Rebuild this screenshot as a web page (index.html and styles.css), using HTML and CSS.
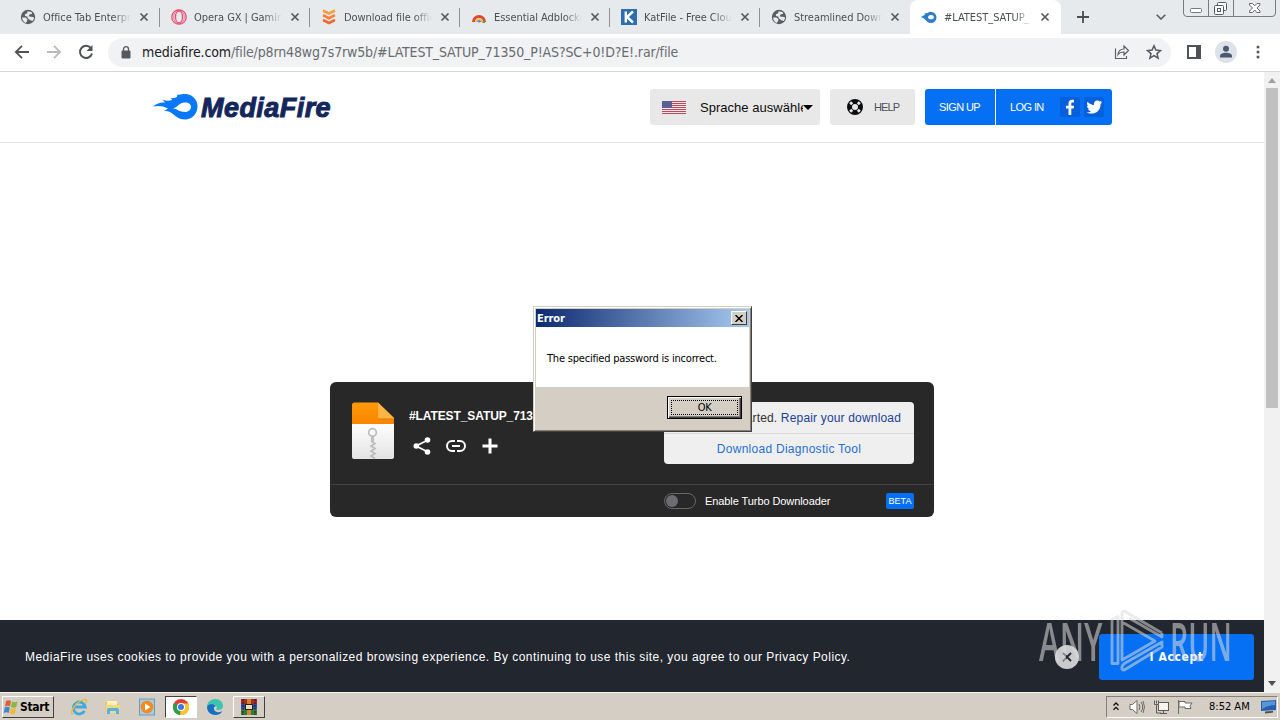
FILE: index.html
```html
<!DOCTYPE html>
<html lang="en">
<head>
    <meta charset="UTF-8">
    <meta name="viewport" content="width=device-width, initial-scale=1.0">
    <title>MediaFire</title>
    <link rel="stylesheet" href="styles.css">
</head>
<body>
    <svg class="defs" width="0" height="0">
        <symbol id="globe" viewBox="0 0 16 16">
            <circle cx="8" cy="8" r="7.2" fill="#5a5e63"/>
            <path d="M2 8.500h3.500l2 1.800-.6 2.200-1.500 1.500C3.600 13 2.200 11 2 8.500zM7.500 2.200l4 .8.800 1.800-2.800.8-.8 1.600 2 .6 2.800.2.6 1.500-1.500 2.500-2.300-.8-2.600-2-.4-1.800-2.500-.4.400-2 2-.8z" fill="#e7eaed"/>
        </symbol>
        <symbol id="close" viewBox="0 0 10 10">
            <path d="M1.500 1.500l7 7M8.500 1.500l-7 7" stroke="#55595e" stroke-width="1.700"/>
        </symbol>
        <symbol id="flame" viewBox="0 0 45 26">
            <path d="M0 12.500C4 9 8 8 12 8.500L9.500 5.500C13 7 16 7 19 6L18 3.800C20 4.500 22 4 24 3L24.500 .5C27 1 29 0 32 0c7 0 12.500 5.500 12.500 12.500S39 25.500 32 25.500c-6 0-9-3-12-5.500-3-2.500-5.500-3.500-9-3l4-2.500C10 11.500 4 11.500 0 12.500z" fill="#0a78fb"/>
            <path d="M20 14.500c4-.5 6-6 12-6 4 0 6 2 6 4.500S35.500 18 32 18c-6 0-7-3-12-3.500z" fill="#fff"/>
        </symbol>
    </svg>

    <div class="tabstrip">
        <div class="tab">
            <svg class="favicon"><use href="#globe"/></svg>
            <span class="tab-title">Office Tab Enterprise</span>
            <svg class="tab-close"><use href="#close"/></svg>
        </div>
        <div class="tab">
            <svg class="favicon" viewBox="0 0 16 16" fill="none" stroke="#ea4f78">
                <circle cx="8" cy="8" r="7.2" stroke-width="1.3"/>
                <ellipse cx="8" cy="8" rx="3.500" ry="6" stroke-width="1.3"/>
                <ellipse cx="8" cy="8" rx="5.300" ry="6.800" stroke-width=".7"/>
            </svg>
            <span class="tab-title">Opera GX | Gaming Browser</span>
            <svg class="tab-close"><use href="#close"/></svg>
        </div>
        <div class="tab">
            <svg class="favicon" viewBox="0 0 16 16" fill="none" stroke-width="2.6">
                <path d="M2 1.500l6 3 6-3" stroke="#f9a03c"/>
                <path d="M2 6.200l6 3 6-3" stroke="#f57f3b"/>
                <path d="M2 11l6 3 6-3" stroke="#ee6a35"/>
            </svg>
            <span class="tab-title">Download file office</span>
            <svg class="tab-close"><use href="#close"/></svg>
        </div>
        <div class="tab">
            <svg class="favicon" viewBox="0 0 16 16" fill="none">
                <path d="M2.500 13a5.500 5.500 0 0 1 11 0" stroke="#df4634" stroke-width="3"/>
                <path d="M5 13a3.200 3.200 0 0 1 6.200 0" stroke="#f6c431" stroke-width="2"/>
                <path d="M6.800 13a1.500 1.500 0 0 1 2.600 0" stroke="#4285f4" stroke-width="1.800"/>
                <path d="M11.500 13h2.500" stroke="#51a65b" stroke-width="2"/>
            </svg>
            <span class="tab-title">Essential Adblocker</span>
            <svg class="tab-close"><use href="#close"/></svg>
        </div>
        <div class="tab">
            <svg class="favicon" viewBox="0 0 16 16">
                <rect width="16" height="16" fill="#2d6db0"/>
                <path d="M4.800 2.500v11M12 2.500L6 8l6 5.500" stroke="#fff" stroke-width="2.400" fill="none"/>
            </svg>
            <span class="tab-title">KatFile - Free Cloud</span>
            <svg class="tab-close"><use href="#close"/></svg>
        </div>
        <div class="tab">
            <svg class="favicon"><use href="#globe"/></svg>
            <span class="tab-title">Streamlined Download</span>
            <svg class="tab-close"><use href="#close"/></svg>
        </div>
        <div class="tab active">
            <svg class="favicon" viewBox="0 0 16 16">
                <path d="M0 8l4-2.200L3.300 4.500 6.500 4A5.600 5.600 0 1 1 6 12.500L3 9.500z" fill="#2f7ccb"/>
                <ellipse cx="10" cy="8.200" rx="2.800" ry="2.100" fill="#fff"/>
            </svg>
            <span class="tab-title">#LATEST_SATUP_71350</span>
            <svg class="tab-close"><use href="#close"/></svg>
        </div>
        <svg class="new-tab" viewBox="0 0 12 12"><path d="M6 0v12M0 6h12" stroke="#4a4e52" stroke-width="1.800"/></svg>
        <svg class="tab-search" viewBox="0 0 10 6"><path d="M.7.7L5 5 9.300.7" fill="none" stroke="#5a5e63" stroke-width="1.600"/></svg>
        <svg class="window-buttons" viewBox="0 0 94 17" fill="none" stroke="#777b80">
            <path d="M.5 0v13q0 3.500 3.500 3.500h85q3.500 0 3.500-3.500V0M25.500 0v16M50.500 0v16"/>
            <rect x="7.500" y="8.500" width="11" height="4" rx="1" fill="#fff"/>
            <g stroke="#55585c"><rect x="34.500" y="2.500" width="9" height="8" rx="1" fill="#fff"/><rect x="31.500" y="5.500" width="9" height="9" rx="1" fill="#fff"/><rect x="34.500" y="8.500" width="3" height="3"/></g>
            <path d="M66.500 3.500h3l2.200 2.300 2.200-2.300h3v1.500L74 8l3 3v1.500h-3.300L71.700 10l-2.200 2.500h-3V11l3-3-3-3z" fill="#fff" stroke="#66696d"/>
        </svg>
    </div>

    <div class="toolbar">
        <svg class="nav-icon" viewBox="0 0 16 16" fill="none" stroke="#4f5357" stroke-width="1.800"><path d="M15 8H2M8 1.800L1.800 8 8 14.200"/></svg>
        <svg class="nav-icon" viewBox="0 0 16 16" fill="none" stroke="#b9bcbf" stroke-width="1.800"><path d="M1 8h13M8 1.800L14.200 8 8 14.200"/></svg>
        <svg class="nav-icon" viewBox="0 0 16 16" fill="none" stroke="#4f5357" stroke-width="2"><path d="M13.200 4.500A6.100 6.100 0 1 0 14 9.500"/><path d="M14.500 1v6h-6z" fill="#4f5357" stroke="none"/></svg>
        <div class="omnibox">
            <svg class="lock" viewBox="0 0 10 13"><rect x=".5" y="4.500" width="9" height="8" rx="1" fill="#55595e"/><path d="M2.500 5V3.200a2.500 2.500 0 0 1 5 0V5" fill="none" stroke="#55595e" stroke-width="1.300"/></svg>
            <span class="url"><b>mediafire.com</b>/file/p8rn48wg7s7rw5b/#LATEST_SATUP_71350_P!AS?SC+0!D?E!.rar/file</span>
            <svg class="share" viewBox="0 0 16 16" fill="none" stroke="#5c6065" stroke-width="1.200"><path d="M1.500 4.500v10h11V12M4 10.500c.5-4 2.500-5.500 6-5.500V2l4.500 4.500L10 11V8c-3 0-4.500.5-6 2.500z"/></svg>
            <svg class="star" viewBox="0 0 16 16" fill="none" stroke="#55595e" stroke-width="1.500"><path d="M8 1.800l1.900 4.300 4.600.4-3.500 3.100 1.100 4.600L8 11.700l-4.100 2.500L5 9.600 1.500 6.500l4.600-.4z"/></svg>
        </div>
        <svg class="side-panel" viewBox="0 0 14 14"><path d="M1 1h12v12H1z" fill="none" stroke="#4f5357" stroke-width="2"/><path d="M9 1h4v12H9z" fill="#4f5357"/></svg>
        <svg class="avatar" viewBox="0 0 22 22"><circle cx="11" cy="11" r="11" fill="#dde1e8"/><circle cx="11" cy="7.800" r="3" fill="#4b5873"/><path d="M5 16.500v-1.500c0-2 3-3.200 6-3.200s6 1.200 6 3.200v1.500z" fill="#4b5873"/></svg>
        <svg class="kebab" viewBox="0 0 4 14" fill="#55595e"><circle cx="2" cy="2" r="1.500"/><circle cx="2" cy="7" r="1.500"/><circle cx="2" cy="12" r="1.500"/></svg>
    </div>

    <div class="viewport">
        <div class="page">
            <header>
                <div class="logo">
                    <svg><use href="#flame"/></svg>
                    <span>MediaFire</span>
                </div>
                <div class="language">
                    <svg class="flag" viewBox="0 0 24 13">
                        <rect width="24" height="13" fill="#f4e9ea"/>
                        <path d="M0 .5h24M0 2.500h24M0 4.500h24M0 6.500h24M0 8.500h24M0 10.500h24M0 12.500h24" stroke="#b9485a"/>
                        <rect width="10" height="7" fill="#5a5f94"/>
                    </svg>
                    <span>Sprache auswählen</span>
                    <i class="caret"></i>
                </div>
                <div class="help">
                    <svg viewBox="0 0 16 16"><circle cx="8" cy="8" r="5.500" fill="none" stroke="#0b0c0e" stroke-width="5"/><path d="M3.200 3.200l2 2M12.800 3.200l-2 2M3.200 12.800l2-2M12.800 12.800l-2-2" stroke="#e8e8e8" stroke-width="2.800"/></svg>
                    HELP
                </div>
                <div class="account">
                    <span class="sign-up">SIGN UP</span>
                    <span class="log-in">LOG IN</span>
                    <svg class="social" viewBox="0 0 20 20"><rect width="20" height="20" rx="2" fill="#0660db"/><path d="M8.500 18v-6.500H6V8.700h2.500V6.500C8.500 4 10 2.800 12 2.800h2v2.700h-1.500c-1 0-1.200.5-1.200 1.400v1.800h2.800l-.4 2.800h-2.400V18z" fill="#fff"/></svg>
                    <svg class="social" viewBox="0 0 20 20"><rect width="20" height="20" rx="2" fill="#0660db"/><path d="M2.500 15.500c2 0 3.500-.5 4.500-1.300-1.500 0-2.600-1-3-2.200h1.300C3.700 11.500 3 10.200 3 8.700l1.300.4C3 8 2.700 6.200 3.500 4.700 5.200 6.700 7.400 7.900 10 8c-.5-2.500 1-4.500 3.300-4.500 1 0 1.800.4 2.400 1l2-.8-1.200 1.900 1.800-.5-1.700 1.800c.2 5-3.500 9.600-8.900 9.600-2 0-3.800-.4-5.200-1z" fill="#fff"/></svg>
                </div>
            </header>

            <div class="download-card">
                <div class="file-row">
                    <svg class="zip" viewBox="0 0 42 58">
                        <defs>
                            <linearGradient id="orange" x2="0" y2="1"><stop stop-color="#ff9a08"/><stop offset="1" stop-color="#fa8500"/></linearGradient>
                            <linearGradient id="paper" x2="0" y2="1"><stop stop-color="#fff"/><stop offset="1" stop-color="#e3e3e3"/></linearGradient>
                        </defs>
                        <path d="M0 21h42v34q0 2-2 2H2q-2 0-2-2z" fill="url(#paper)"/>
                        <path d="M0 22V3q0-2.500 2.500-2.500H26L42 16v6z" fill="url(#orange)"/>
                        <path d="M26 .5L42 16v1H26z" fill="#ffb443"/><path d="M26 17h16" stroke="#d97a0a"/>
                        <circle cx="20.500" cy="30.500" r="3.800" fill="none" stroke="#bcbcbc" stroke-width="1.800"/>
                        <path d="M20.500 34v5" stroke="#bcbcbc" stroke-width="3"/>
                        <path d="M19 39l4 2.500-4 2.500 4 2.500-4 2.500 4 2.500-4 2.500 4 2.500" fill="none" stroke="#bcbcbc" stroke-width="1.700"/>
                    </svg>
                    <div class="file-info">
                        <div class="file-name">#LATEST_SATUP_713</div>
                        <div class="file-actions">
                            <svg viewBox="0 0 20 20"><path d="M16 4L4 10l12 6" fill="none" stroke="#fff" stroke-width="1.800"/><g fill="#fff"><circle cx="15.500" cy="4" r="2.800"/><circle cx="4.300" cy="10" r="2.800"/><circle cx="15.500" cy="16" r="2.800"/></g></svg>
                            <svg viewBox="0 0 20 20" fill="none" stroke="#fff" stroke-width="2"><path d="M9 5H6a5 5 0 0 0 0 10h3M11 5h3a5 5 0 0 1 0 10h-3M6 10h8"/></svg>
                            <svg viewBox="0 0 20 20"><path d="M10 2.500v15M2.500 10h15" stroke="#fff" stroke-width="3"/></svg>
                        </div>
                    </div>
                    <div class="download-box">
                        <div class="started">Download started. <a>Repair your download</a></div>
                        <div class="diagnostic"><a>Download Diagnostic Tool</a></div>
                    </div>
                </div>
                <div class="turbo-row">
                    <span class="toggle"></span>
                    <span class="turbo-label">Enable Turbo Downloader</span>
                    <span class="beta">BETA</span>
                </div>
            </div>

            <div class="cookie-bar">
                <p>MediaFire uses cookies to provide you with a personalized browsing experience. By continuing to use this site, you agree to our Privacy Policy.</p>
                <svg class="dismiss" viewBox="0 0 24 24"><circle cx="12" cy="12" r="12" fill="#c9cacc"/><path d="M8 8l8 8M16 8l-8 8" stroke="#22262f" stroke-width="1.800"/></svg>
                <button class="accept">I Accept</button>
            </div>
        </div>
        <div class="scrollbar">
            <i class="arrow up"></i>
            <div class="thumb"></div>
            <i class="arrow down"></i>
        </div>
    </div>

    <div class="taskbar">
        <div class="start">
            <svg viewBox="0 0 16 16"><path d="M3 2c2-1 3.500-1 5 0L7 7.500c-1.500-1-3-1-5 0z" fill="#e0603a"/><path d="M9 2.500c2 1 3.500 1 5.500 0l-1.200 5.500c-2 1-3.500 1-5.300 0z" fill="#86b93c"/><path d="M1.800 8.500c2-1 3.500-1 5 0L5.700 14c-1.500-1-3-1-5 0z" fill="#3f86cf"/><path d="M7.800 9c2 1 3.500 1 5.300 0L12 14.500c-2 1-3.500 1-5.300 0z" fill="#f2b938"/></svg>
            Start
        </div>
        <svg class="task-icon" viewBox="0 0 18 18" fill="none"><path d="M14.500 13a6 6 0 1 1 .7-4H5" stroke="#43a8e0" stroke-width="2.800"/><path d="M3 16C0 16 2 10 7 5.500S16 .5 16.500 2.500c.2 1-.3 2-.8 3" stroke="#e9b93c" stroke-width="1.400"/></svg>
        <svg class="task-icon" viewBox="0 0 18 18"><path d="M1 4h5l1.500 2H15v9H2z" fill="#e9c660"/><path d="M3 3h10v5H3z" fill="#fff2b5"/><path d="M2 7h14v8H2z" fill="#f1d885"/><path d="M3 16v-4q0-2 2-2h8q2 0 2 2v4h-3v-3H6v3z" fill="#58b1df"/></svg>
        <svg class="task-icon" viewBox="0 0 18 18"><rect x="1.500" y="1" width="15" height="16" fill="#a9cbe2" stroke="#6b9cc0"/><circle cx="9" cy="9" r="6.300" fill="#f28a1d"/><path d="M7 5.500l5.500 3.500L7 12.500z" fill="#fff"/></svg>
        <div class="task-button pressed">
            <svg viewBox="0 0 18 18"><circle cx="9" cy="9" r="8" fill="#e4402f"/><path d="M9 9L2 5a8 8 0 0 0 6 12z" fill="#2ca14c"/><path d="M9 9l-1 8a8 8 0 0 0 8.200-11.500H9z" fill="#fbc52d"/><circle cx="9" cy="9" r="4" fill="#fff"/><circle cx="9" cy="9" r="3" fill="#3b78e7"/></svg>
        </div>
        <svg class="task-icon edge" viewBox="0 0 18 18"><path d="M1 9C1 4 5 1 9.500 1S17 4.500 17 8c0 2.500-2 4-5 4-1.500 0-2-.5-1.500-1.500C11.500 8 9 6 6 6 3.500 6 1.500 7.500 1 9z" fill="#3cc4b0"/><path d="M1 9c.5-2 2.500-3 5-3 2 0 3.500 1 4 2.300C7 8 7 13 11 14c2 .5 4 0 5.500-1-1.500 2.600-4 4-7 4C5 17 1 14 1 9z" fill="#1570bf"/></svg>
        <div class="task-button">
            <svg viewBox="0 0 18 18"><path d="M1 1h16v5H1z" fill="#a82a2c"/><path d="M1 6h16v5.500H1z" fill="#2e4fa3"/><path d="M1 11.500h16V17H1z" fill="#347a38"/><path d="M7 1h4v16H7z" fill="#c88b27"/><path d="M3 1v16M15 1v16" stroke="#1e1b25" stroke-dasharray="2 1"/><rect x="5.500" y="6.500" width="7" height="5" fill="#eee0b5" stroke="#292014"/></svg>
        </div>
        <div class="tray">
            <svg class="chevrons" viewBox="0 0 6 9" fill="none" stroke="#111" stroke-width="1.300"><path d="M.5 3.500L3 1l2.500 2.500M.5 7.800L3 5.300l2.500 2.500"/></svg>
            <svg class="tray-icon" viewBox="0 0 16 16" fill="#fff" stroke="#6b6b68"><path d="M1 5.500h2.500L8 1.500v13l-4.500-4H1z"/><path d="M10 5q2 3 0 6M12 3q3.500 5 0 10M14 2q3 6 0 12" fill="none"/></svg>
            <svg class="tray-icon" viewBox="0 0 16 16" fill="#f6f4ef" stroke="#5c5b58"><rect x="5.500" y="3.500" width="10" height="8"/><path d="M7 14.500h7M10.500 12v2"/><path d="M1.500 1.500v4h2V14H8M3.500 1.500v3M5.500 1.500v4h-2" fill="none"/></svg>
            <svg class="tray-icon" viewBox="0 0 16 16" fill="#fff" stroke="#6b6b68"><path d="M1.500 1v14M2 2.500h6v1.500h7l-2 3 1 2.500H8V8H2z"/></svg>
            <span class="clock">8:52 AM</span>
            <svg class="desktop-icon" viewBox="0 0 16 14"><path d="M0 1l15-1v10L0 11z" fill="#265fae"/><path d="M1 2l13-1v4Q7 5 1 9z" fill="#5994d6"/><path d="M4 13.500l8-1V11l-8 .5z" fill="#4a4d53"/></svg>
        </div>
    </div>

    <div class="dialog">
        <div class="dialog-title">
            Error
            <span class="dialog-close"><svg viewBox="0 0 8 7"><path d="M.5 0l7 7M7.500 0l-7 7" stroke="#000" stroke-width="1.400"/></svg></span>
        </div>
        <div class="dialog-message">The specified password is incorrect.</div>
        <div class="dialog-footer"><div class="ok"><span>OK</span></div></div>
    </div>

    <div class="watermark">
        <span class="any">ANY</span>
        <svg viewBox="0 0 56 64" fill="none" stroke-linejoin="round">
            <path d="M3 10.500v44h6v-47zM13 48V4.500q0-3 3-2L53 24M13 13l33 19-33 19zM53 24v4L20 9M53 33L18 53q-6 3-5 7 1 2 4 0l36-22z"/>
        </svg>
        <span class="run">RUN</span>
    </div>
</body>
</html>
```
FILE: styles.css
```css
* {
    box-sizing: border-box;
}

body {
    margin: 0;
    width: 1280px;
    height: 720px;
    overflow: hidden;
    display: flex;
    flex-direction: column;
    position: relative;
    background-color: white;
    font-family: "Liberation Sans", Arial, sans-serif;
}

svg {
    display: block;
    flex: none;
}

.defs {
    position: absolute;
}

/* browser tabs */
.tabstrip {
    height: 34px;
    flex: none;
    display: flex;
    align-items: center;
    padding-left: 10px;
    background-color: #e7eaed;
    font-family: "DejaVu Sans Condensed", "DejaVu Sans", sans-serif;
    font-size: 11px;
    color: #4b4f54;
}

.tab {
    width: 150px;
    height: 34px;
    display: flex;
    align-items: center;
    padding: 0 10px 0 11px;
    background: linear-gradient(#8d9195, #8d9195) right 8px / 1px 19px no-repeat;
}

.tab:first-child {
    padding-left: 10px;
    padding-right: 11px;
}

.tab:nth-child(6) {
    background: none;
}

.tab.active {
    background: white;
    border-radius: 8px 8px 0 0;
    width: 151px;
    padding-right: 11px;
}

.favicon {
    width: 16px;
    height: 16px;
    margin-right: 7px;
}

.tab-title {
    width: 88px;
    overflow: hidden;
    white-space: nowrap;
    letter-spacing: -0.05px;
    -webkit-mask-image: linear-gradient(to right, black 80%, transparent);
    mask-image: linear-gradient(to right, black 80%, transparent);
}

.tab-close {
    width: 10px;
    height: 10px;
    margin-left: auto;
}

.new-tab {
    width: 12px;
    height: 12px;
    margin-left: 16px;
}

.tab-search {
    width: 10px;
    height: 6px;
    margin-left: 67px;
}

.window-buttons {
    width: 94px;
    height: 17px;
    margin-left: 17px;
    align-self: flex-start;
}

/* address bar */
.toolbar {
    height: 38px;
    flex: none;
    display: flex;
    align-items: center;
    padding: 0 20px 1px 14px;
    border-bottom: 1px solid #d4d6d8;
}

.nav-icon {
    width: 16px;
    height: 16px;
    margin-right: 16px;
}

.omnibox {
    width: 1063px;
    height: 29px;
    margin-left: -2px;
    border-radius: 15px;
    background-color: #f1f2f4;
    display: flex;
    align-items: center;
    padding: 0 9px 0 13px;
}

.lock {
    width: 10px;
    height: 13px;
    margin-right: 11px;
}

.url {
    font-family: "DejaVu Sans Condensed", "DejaVu Sans", sans-serif;
    font-size: 14px;
    letter-spacing: -0.14px;
    white-space: nowrap;
    color: #686c71;
}

.url b {
    font-weight: normal;
    color: #202124;
}

.share {
    width: 16px;
    height: 16px;
    margin-left: auto;
}

.star {
    width: 16px;
    height: 16px;
    margin-left: 16px;
}

.side-panel {
    width: 14px;
    height: 14px;
    margin-left: 16px;
}

.avatar {
    width: 22px;
    height: 22px;
    margin-left: 14px;
}

.kebab {
    width: 4px;
    height: 14px;
    margin-left: auto;
}

/* web page */
.viewport {
    height: 620px;
    flex: none;
    display: flex;
}

.page {
    width: 1264px;
    display: flex;
    flex-direction: column;
}

header {
    height: 71px;
    display: flex;
    align-items: center;
    padding: 0 152px 0 153px;
    border-bottom: 1px solid #e5e5e6;
}

.logo {
    display: flex;
    align-items: center;
    margin-right: auto;
    font-size: 27px;
    font-weight: bold;
    font-style: italic;
    letter-spacing: 0.45px;
    line-height: 26px;
    color: #13275d;
    -webkit-text-stroke: 1px #13275d;
}

.logo svg {
    width: 45px;
    height: 26px;
    margin-right: 3px;
}

.logo span {
    padding-top: 2px;
}

.language,
.help,
.account {
    height: 36px;
    display: flex;
    align-items: center;
    border-radius: 3px;
    background-color: #e8e8e8;
}

.language {
    width: 170px;
    padding: 0 7px 0 12px;
    font-size: 13px;
    color: #0d0d0d;
}

.language span {
    width: 103px;
    margin-left: 14px;
    overflow: hidden;
    white-space: nowrap;
    letter-spacing: 0.03px;
}

.flag {
    width: 24px;
    height: 13px;
}

.caret {
    border: 5px solid transparent;
    border-top-color: #000;
    border-bottom: 0;
}

.help {
    width: 85px;
    margin: 0 10px;
    padding-left: 17px;
    font-size: 11px;
    letter-spacing: -0.9px;
    color: #4a505a;
}

.help svg {
    width: 16px;
    height: 16px;
    margin-right: 11px;
}

.account {
    width: 187px;
    background-color: #0570f4;
    color: white;
    font-size: 11px;
    letter-spacing: -0.6px;
}

.sign-up {
    width: 71px;
    line-height: 36px;
    padding-left: 14px;
    border-right: 1px solid white;
}

.log-in {
    width: 64px;
    padding-left: 14px;
}

.social {
    width: 20px;
    height: 20px;
    margin-right: 4px;
}

.download-card {
    width: 604px;
    height: 135px;
    margin: 239px 0 0 330px;
    border-radius: 6px;
    background-color: #282828;
    color: white;
}

.file-row {
    height: 103px;
    display: flex;
    padding: 20px 20px 0 22px;
    border-bottom: 1px solid #444;
}

.zip {
    width: 42px;
    height: 58px;
}

.file-info {
    width: 255px;
    margin-left: 15px;
    flex: none;
}

.file-name {
    margin-top: 6px;
    font-size: 12px;
    font-weight: bold;
    line-height: 17px;
    letter-spacing: -0.1px;
}

.file-actions {
    display: flex;
    gap: 14px;
    margin: 11px 0 0 3px;
}

.file-actions svg {
    width: 20px;
    height: 20px;
}

.download-box {
    width: 250px;
    height: 62px;
    border-radius: 4px;
    background-color: #efefef;
    font-size: 12px;
    text-align: center;
    color: #333;
}

.started {
    height: 32px;
    line-height: 32px;
    border-bottom: 1px solid #d9dcde;
    letter-spacing: 0.17px;
    white-space: nowrap;
    text-align: right;
    padding-right: 13px;
}

.started a {
    color: #1b4197;
}

.diagnostic {
    line-height: 31px;
    letter-spacing: 0.27px;
}

.diagnostic a {
    color: #2770d2;
}

.turbo-row {
    height: 32px;
    display: flex;
    align-items: center;
    padding: 0 20px 0 334px;
    font-size: 11px;
}

.toggle {
    width: 32px;
    height: 16px;
    padding: 1px;
    border: 1px solid #66676b;
    border-radius: 8px;
}

.toggle::before {
    content: "";
    display: block;
    width: 12px;
    height: 12px;
    border-radius: 50%;
    background-color: #6c6d73;
}

.turbo-label {
    margin-left: 9px;
    letter-spacing: -0.08px;
}

.beta {
    width: 28px;
    margin-left: auto;
    border-radius: 2px;
    background-color: #0570f4;
    font-size: 9px;
    line-height: 16px;
    text-align: center;
}

.cookie-bar {
    height: 72px;
    margin-top: auto;
    display: flex;
    align-items: center;
    padding: 2px 10px 0 25px;
    background-color: #22262f;
    color: white;
}

.cookie-bar p {
    margin: 0 auto 0 0;
    font-size: 12px;
    letter-spacing: 0.475px;
    white-space: nowrap;
}

.dismiss {
    width: 24px;
    height: 24px;
    margin-right: 20px;
}

.accept {
    width: 155px;
    height: 46px;
    border: 0;
    border-radius: 3px;
    background-color: #0570f4;
    color: white;
    font-family: "DejaVu Sans Condensed", "DejaVu Sans", sans-serif;
    font-size: 12px;
    font-weight: bold;
    letter-spacing: 0.6px;
}

.scrollbar {
    width: 16px;
    display: flex;
    flex-direction: column;
    align-items: center;
    background-color: #f1f1f1;
}

.arrow {
    border: 4px solid transparent;
}

.arrow.up {
    margin-top: 6px;
    border-top: 0;
    border-bottom: 5px solid #a0a0a0;
}

.arrow.down {
    margin: auto 0 6px;
    border-bottom: 0;
    border-top: 5px solid #505050;
}

.thumb {
    width: 12px;
    height: 320px;
    margin-top: 5px;
    background-color: #c1c1c1;
}

/* windows taskbar */
.taskbar {
    height: 28px;
    flex: none;
    display: flex;
    align-items: center;
    padding: 0 2px;
    border-top: 1px solid #f7f5f0;
    background-color: #d5cec5;
    font-family: "DejaVu Sans Condensed", "DejaVu Sans", sans-serif;
    font-size: 11px;
}

.start {
    width: 52px;
    height: 22px;
    display: flex;
    align-items: center;
    border: 1px solid;
    border-color: white #404040 #404040 white;
    font-weight: bold;
    font-size: 12px;
    letter-spacing: -0.3px;
}

.start svg {
    width: 16px;
    height: 16px;
    margin-right: 1px;
}

.task-icon {
    width: 18px;
    height: 18px;
    margin-left: 16px;
}

.task-button {
    width: 32px;
    height: 22px;
    margin-left: 9px;
    display: flex;
    align-items: center;
    justify-content: center;
    border: 1px solid;
    border-color: white #404040 #404040 white;
}

.task-button.pressed {
    background-color: white;
    border-color: #404040 white white #404040;
}

.task-button svg {
    width: 18px;
    height: 18px;
}

.task-icon.edge {
    margin-left: 9px;
}

.tray {
    width: 172px;
    height: 22px;
    margin-left: auto;
    display: flex;
    align-items: center;
    border: 1px solid;
    border-color: #858078 white white #858078;
    padding-left: 6px;
}

.chevrons {
    width: 6px;
    height: 9px;
    margin-right: 2px;
}

.tray-icon {
    width: 16px;
    height: 16px;
    margin-left: 8px;
}

.clock {
    margin-left: 16px;
    white-space: nowrap;
}

.desktop-icon {
    width: 16px;
    height: 14px;
    margin-left: auto;
}

/* error window */
.dialog {
    position: absolute;
    left: 533px;
    top: 306px;
    width: 219px;
    height: 126px;
    padding: 2px;
    border: 1px solid;
    border-color: #d5cec5 #404040 #404040 #d5cec5;
    box-shadow: inset 1px 1px white, inset -1px -1px #858078;
    background-color: #d5cec5;
    font-family: "DejaVu Sans Condensed", "DejaVu Sans", sans-serif;
    font-size: 11px;
    color: black;
}

.dialog-title {
    height: 18px;
    display: flex;
    align-items: center;
    justify-content: space-between;
    padding: 0 2px 0 1px;
    background: linear-gradient(to right, #0d2a70, #a6c9ef);
    color: white;
    font-weight: bold;
    letter-spacing: -0.1px;
}

.dialog-close {
    width: 16px;
    height: 14px;
    display: flex;
    align-items: center;
    justify-content: center;
    border: 1px solid;
    border-color: white #404040 #404040 white;
    background-color: #d5cec5;
}

.dialog-close svg {
    width: 8px;
    height: 7px;
}

.dialog-message {
    height: 60px;
    padding-left: 11px;
    line-height: 63px;
    background-color: white;
    letter-spacing: -0.2px;
    white-space: nowrap;
}

.dialog-footer {
    display: flex;
    justify-content: flex-end;
    padding: 9px 7px 0;
}

.ok {
    width: 75px;
    height: 23px;
    padding: 3px;
    border: 1px solid black;
    box-shadow: inset 1px 1px white, inset -1px -1px #404040, inset -2px -2px #858078;
}

.ok span {
    display: block;
    height: 15px;
    border: 1px dotted black;
    line-height: 14px;
    text-align: center;
    letter-spacing: -0.5px;
}

.watermark {
    position: absolute;
    left: 1039px;
    top: 609px;
    display: flex;
    align-items: center;
    opacity: 0.55;
    color: #dcdcdc;
    font-family: "Open Sans", sans-serif;
    font-size: 52px;
    line-height: 64px;
}

.watermark span {
    display: block;
    transform-origin: left center;
}

.watermark svg {
    width: 56px;
    height: 64px;
    stroke: #dcdcdc;
    stroke-width: 2.8px;
}

.watermark .any {
    width: 70px;
    transform: scaleX(0.6);
    font-weight: 600;
}

.watermark .run {
    margin-left: 5px;
    transform: scaleX(0.55);
    font-weight: 600;
}
```
